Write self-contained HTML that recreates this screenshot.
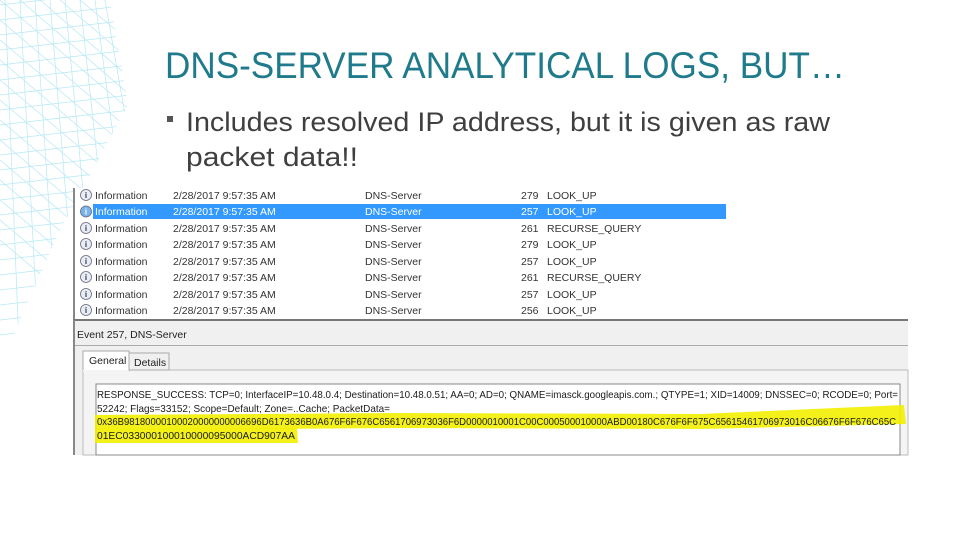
<!DOCTYPE html>
<html><head><meta charset="utf-8"><style>
html,body{margin:0;padding:0;background:#fff;width:960px;height:540px;overflow:hidden}
svg{display:block}
text{font-family:"Liberation Sans",sans-serif}
</style></head><body>
<svg width="960" height="540" viewBox="0 0 960 540" xmlns="http://www.w3.org/2000/svg">
<defs><clipPath id="wc"><path d="M0 0 L110 0 L128 105 L60 230 L0 365 Z"/></clipPath></defs>
<g clip-path="url(#wc)" stroke="#b5e8f5" stroke-width="0.7" fill="none">
<path d="M0 5 L130 -10 M0 20 L130 5 M0 35 L130 20 M0 50 L130 35 M0 65 L130 50 M0 80 L130 65 M0 95 L130 80 M0 110 L130 95 M0 125 L130 110 M0 140 L130 125 M0 155 L130 140 M0 170 L130 155 M0 185 L130 170 M0 200 L130 185 M0 215 L130 200 M0 230 L130 215 M0 245 L130 230 M0 260 L130 245 M0 275 L130 260 M0 290 L130 275 M0 305 L130 290 M0 320 L130 305 M0 335 L130 320"/>
<path d="M0 0 L130 110 M0 20 L130 130 M0 40 L130 150 M0 60 L130 170 M0 80 L130 190 M0 100 L130 210 M0 120 L130 230 M0 140 L130 250 M0 160 L130 270 M0 180 L130 290 M0 200 L130 310 M0 220 L130 330 M0 240 L130 350 M20 0 L130 95 M40 0 L130 78 M60 0 L130 60 M80 0 L130 42"/>
<path d="M5 0 L20 370 M20 0 L40 370 M35 0 L60 370 M50 0 L80 370 M65 0 L100 370 M80 0 L120 370 M95 0 L135 300 M105 0 L140 200"/>
</g>
<!-- title -->
<text x="165" y="78" font-size="37" fill="#1f7b8c" textLength="680" lengthAdjust="spacingAndGlyphs">DNS-SERVER ANALYTICAL LOGS, BUT…</text>
<rect x="167" y="116" width="6" height="6" fill="#555"/>
<text x="186" y="131" font-size="27" fill="#3f3f3f" textLength="644" lengthAdjust="spacingAndGlyphs">Includes resolved IP address, but it is given as raw</text>
<text x="186" y="166" font-size="27" fill="#3f3f3f" textLength="172" lengthAdjust="spacingAndGlyphs">packet data!!</text>

<!-- screenshot: list -->
<rect x="73" y="188" width="835" height="132" fill="#fff"/>
<rect x="73" y="188" width="2" height="132" fill="#888"/>
<rect x="93" y="204" width="633" height="15" fill="#3399ff"/>
<g font-size="10.5" fill="#333">
<text x="95" y="199">Information</text><text x="173" y="199">2/28/2017 9:57:35 AM</text><text x="365" y="199">DNS-Server</text><text x="521" y="199">279</text><text x="547" y="199">LOOK_UP</text>
<text x="95" y="215" fill="#fff">Information</text><text x="173" y="215" fill="#fff">2/28/2017 9:57:35 AM</text><text x="365" y="215" fill="#fff">DNS-Server</text><text x="521" y="215" fill="#fff">257</text><text x="547" y="215" fill="#fff">LOOK_UP</text>
<text x="95" y="232">Information</text><text x="173" y="232">2/28/2017 9:57:35 AM</text><text x="365" y="232">DNS-Server</text><text x="521" y="232">261</text><text x="547" y="232">RECURSE_QUERY</text>
<text x="95" y="248">Information</text><text x="173" y="248">2/28/2017 9:57:35 AM</text><text x="365" y="248">DNS-Server</text><text x="521" y="248">279</text><text x="547" y="248">LOOK_UP</text>
<text x="95" y="265">Information</text><text x="173" y="265">2/28/2017 9:57:35 AM</text><text x="365" y="265">DNS-Server</text><text x="521" y="265">257</text><text x="547" y="265">LOOK_UP</text>
<text x="95" y="281">Information</text><text x="173" y="281">2/28/2017 9:57:35 AM</text><text x="365" y="281">DNS-Server</text><text x="521" y="281">261</text><text x="547" y="281">RECURSE_QUERY</text>
<text x="95" y="298">Information</text><text x="173" y="298">2/28/2017 9:57:35 AM</text><text x="365" y="298">DNS-Server</text><text x="521" y="298">257</text><text x="547" y="298">LOOK_UP</text>
<text x="95" y="314">Information</text><text x="173" y="314">2/28/2017 9:57:35 AM</text><text x="365" y="314">DNS-Server</text><text x="521" y="314">256</text><text x="547" y="314">LOOK_UP</text>
</g>
<g stroke="#667" stroke-width="0.8" fill="#e8ecf4">
<circle cx="86" cy="195" r="5.5"/><circle cx="86" cy="211.5" r="5.5" fill="#7ab4ec"/><circle cx="86" cy="228" r="5.5"/><circle cx="86" cy="244" r="5.5"/><circle cx="86" cy="261" r="5.5"/><circle cx="86" cy="277" r="5.5"/><circle cx="86" cy="294" r="5.5"/><circle cx="86" cy="310" r="5.5"/>
</g>
<g font-size="8" fill="#335" font-weight="bold" text-anchor="middle">
<text x="86" y="198">i</text><text x="86" y="214.5" fill="#fff">i</text><text x="86" y="231">i</text><text x="86" y="247">i</text><text x="86" y="264">i</text><text x="86" y="280">i</text><text x="86" y="297">i</text><text x="86" y="313">i</text>
</g>
<!-- details pane -->
<rect x="73" y="320" width="835" height="135" fill="#f0f0f0"/>
<rect x="73" y="319" width="835" height="2" fill="#777"/>
<rect x="73" y="320" width="2" height="135" fill="#888"/>
<text x="77" y="338" font-size="10.5" fill="#222">Event 257, DNS-Server</text>
<rect x="75" y="345" width="833" height="1" fill="#aaa"/>
<rect x="83" y="370" width="825" height="85" fill="#f4f4f4" stroke="#bbb" stroke-width="1"/>
<rect x="83" y="351" width="46" height="20" fill="#fff" stroke="#aaa"/>
<rect x="83" y="370" width="46" height="2" fill="#f4f4f4"/>
<rect x="129" y="353" width="40" height="17" fill="#f0f0f0" stroke="#aaa"/>
<text x="89" y="364" font-size="10.5" fill="#222">General</text>
<text x="134" y="366" font-size="10.5" fill="#222">Details</text>
<rect x="96" y="384" width="804" height="71" fill="#fff" stroke="#888" stroke-width="1"/>
<path d="M95 415 L400 413 L700 414 L904 405 L906 424 L700 429 L400 428 L95 430 Z" fill="#f2f000" opacity="0.9"/>
<path d="M95 429 L297 428 L298 443 L95 443 Z" fill="#f2f000" opacity="0.9"/>
<g font-size="10.5" fill="#1a1a1a">
<text x="97" y="398" textLength="801" lengthAdjust="spacingAndGlyphs">RESPONSE_SUCCESS: TCP=0; InterfaceIP=10.48.0.4; Destination=10.48.0.51; AA=0; AD=0; QNAME=imasck.googleapis.com.; QTYPE=1; XID=14009; DNSSEC=0; RCODE=0; Port=</text>
<text x="97" y="412" textLength="293" lengthAdjust="spacingAndGlyphs">52242; Flags=33152; Scope=Default; Zone=..Cache; PacketData=</text>
<text x="97" y="425" textLength="799" lengthAdjust="spacingAndGlyphs">0x36B98180000100020000000006696D6173636B0A676F6F676C6561706973036F6D0000010001C00C000500010000ABD00180C676F6F675C65615461706973016C06676F6F676C65C</text>
<text x="97" y="439" textLength="198" lengthAdjust="spacingAndGlyphs">01EC033000100010000095000ACD907AA</text>
</g>
</svg>
</body></html>
